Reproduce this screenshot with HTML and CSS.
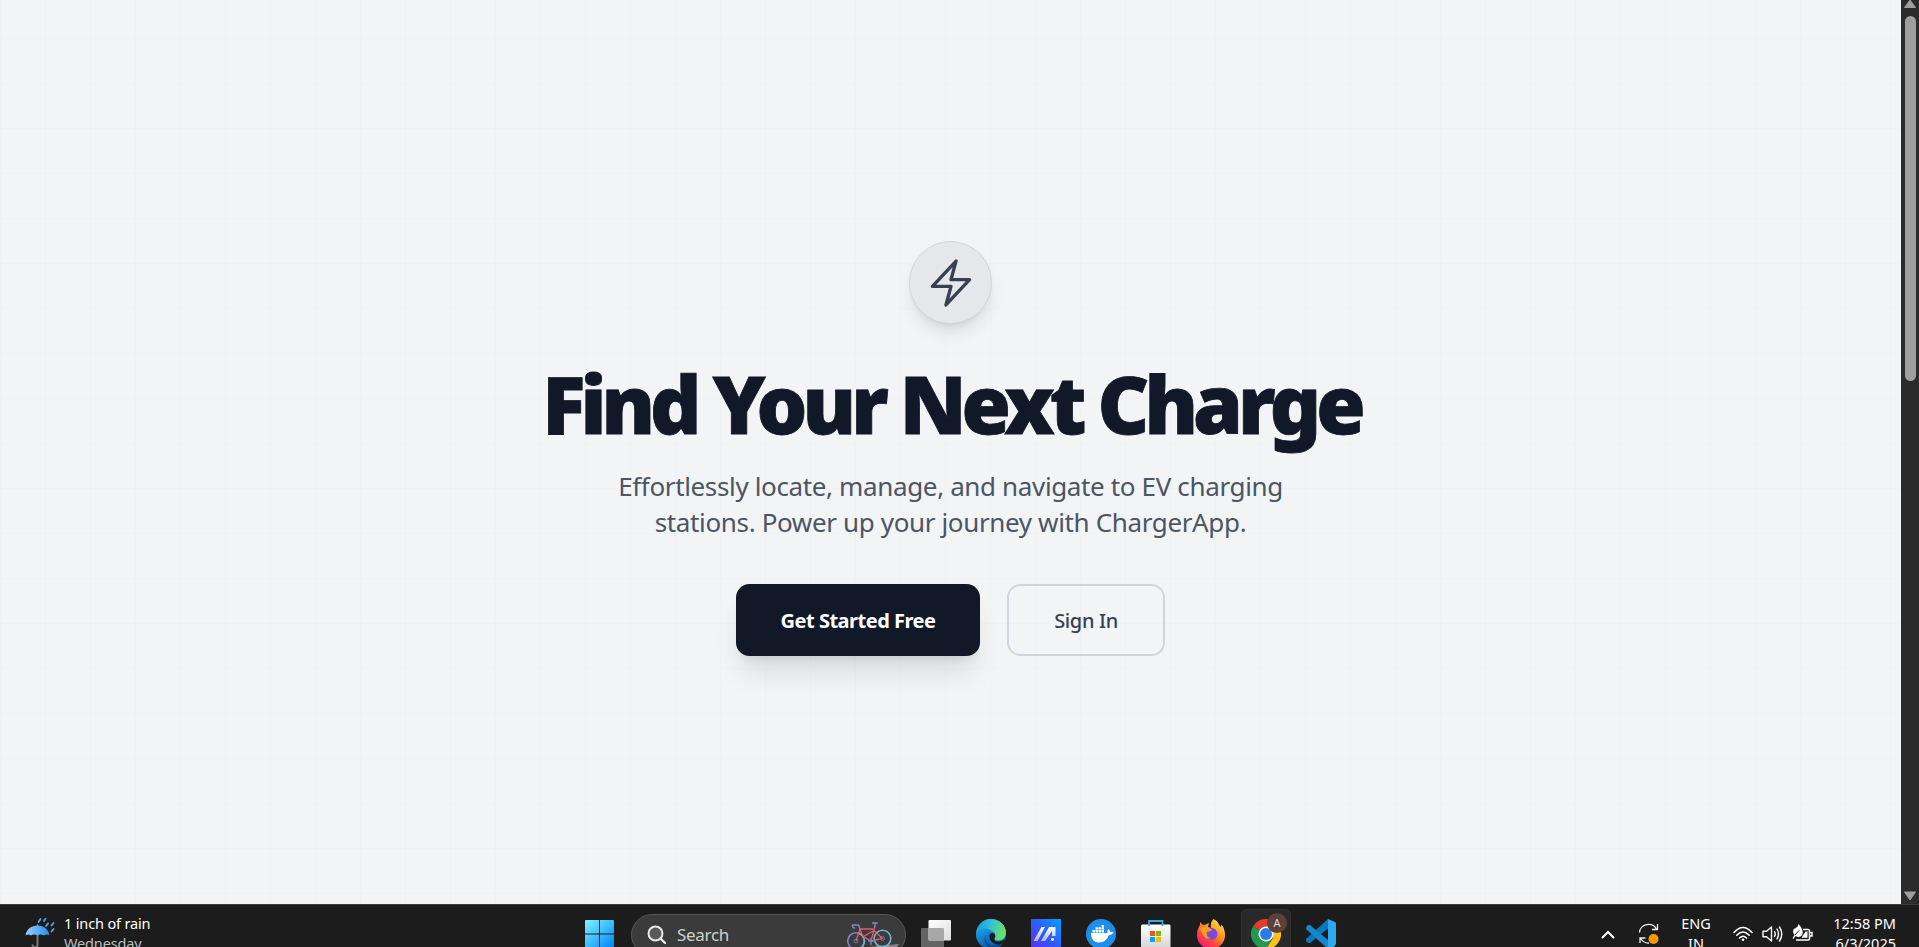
FILE: index.html
```html
<!DOCTYPE html>
<html lang="en">
<head>
<meta charset="utf-8">
<title>ChargerApp</title>
<link rel="stylesheet" href="styles.css">
</head>
<body>
<div class="viewport">
  <main class="hero">
    <div class="badge">
      <svg width="54" height="54" viewBox="0 0 24 24" fill="none" stroke="currentColor" stroke-width="1.5" stroke-linecap="round" stroke-linejoin="round"><path d="M3.75 13.5l10.5-11.25L12 10.5h8.25L9.75 21.75 12 13.5H3.75z"/></svg>
    </div>
    <h1 class="title">Find Your Next Charge</h1>
    <p class="lead">Effortlessly locate, manage, and navigate to EV charging<br>stations. Power up your journey with ChargerApp.</p>
    <div class="actions">
      <a class="btn btn-primary">Get Started Free</a>
      <a class="btn btn-outline">Sign In</a>
    </div>
  </main>
  <div class="scrollbar">
    <svg class="arrow" width="14" height="10" viewBox="0 0 14 10"><path d="M7 0 12.5 7.500H1.5Z" fill="#9f9f9f" stroke="#9f9f9f" stroke-linejoin="round"/></svg>
    <div class="thumb"></div>
    <svg class="arrow" width="14" height="10" viewBox="0 0 14 10"><path d="M1.5 1H12.5L7 9Z" fill="#9f9f9f" stroke="#9f9f9f" stroke-linejoin="round"/></svg>
  </div>
</div>
<footer class="taskbar">
  <div class="weather">
    <svg width="30" height="30" viewBox="0 0 30 30">
      <defs><linearGradient id="um" x2="1"><stop offset="0" stop-color="#9bd0fa"/><stop offset=".45" stop-color="#62b4f7"/><stop offset="1" stop-color="#2b8ae8"/></linearGradient></defs>
      <path d="M12.5 17v9.500q0 3-2.500 3t-2.500-3" fill="none" stroke="#777" stroke-width="2"/>
      <path d="M12.500 6v3" stroke="#777" stroke-width="1.500"/>
      <path d="M.5 17.500C1.500 11 6.500 7.500 12.500 7.500S23.500 11 24.500 17.500Q22 15.500 19 17.500 15.500 15.500 12.500 17.500 9 15.500 6 17.500 3 15.500.5 17.500Z" fill="url(#um)"/>
      <path d="M15.500 1 13.500 4M20.500.800 19 3M28.500 5 26.500 7.500M23 5.500 21 8M28.500 11 26.500 13.500" stroke="#4aa8f5" stroke-width="1.800" stroke-linecap="round"/>
    </svg>
    <div class="weather-text"><span>1 inch of rain</span><span class="dim">Wednesday</span></div>
  </div>
  <div class="apps">
    <div class="cell start">
      <svg width="30" height="30" viewBox="0 0 30 30"><defs><linearGradient id="win" x2="1" y2="1"><stop stop-color="#7df4ff"/><stop offset=".5" stop-color="#3dbdfb"/><stop offset="1" stop-color="#0082f4"/></linearGradient></defs><path d="M0 1.500Q0 1 1 1H14V14.500H0ZM15 1H28Q29 1 29 2V14.500H15ZM0 15.500H14V29H0ZM15 15.500H29V29H15Z" fill="url(#win)"/></svg>
    </div>
    <div class="search">
      <svg width="20" height="20" viewBox="0 0 20 20" fill="#5a5a5a" stroke="#e6e8ec" stroke-width="2"><circle cx="8.500" cy="8.500" r="7"/><path d="M13.500 13.500 18 18" stroke-width="2.400" stroke-linecap="round"/></svg>
      <span class="search-label">Search</span>
      <svg class="bike" width="56" height="34" viewBox="0 0 56 34" fill="none">
        <path d="M18 25.500 55 22 50 30 18 33Z" fill="#858585"/>
        <circle cx="12" cy="19" r="8.300" stroke="#8583d6" stroke-width="1.500"/><path d="M15 11.500A8.300 8.300 0 0 1 18 25" stroke="#70b7d0" stroke-width="1.500"/>
        <circle cx="38.500" cy="16.500" r="8.300" stroke="#78b5cf" stroke-width="1.500"/>
        <circle cx="12" cy="19" r="2" stroke="#5975bd"/><circle cx="38.500" cy="16.500" r="2" stroke="#5975bd"/>
        <path d="M12 19 16 7H29M16 7 18.500 14 27 19 31 4M29 9 18.500 15M27 19 38.500 16.500 29.500 8" stroke="#e0606f" stroke-width="1.300"/>
        <path d="M16 7 14.500 3H8.500Q8 6 11 6M28 1H34M31 1V5M24 19H31M27 16V23" stroke="#7987bd" stroke-width="1.500"/>
      </svg>
    </div>
    <div class="cell">
      <svg width="30" height="30" viewBox="0 0 30 30"><defs><linearGradient id="tv" x2="1" y2="1"><stop stop-color="#fff"/><stop offset="1" stop-color="#dedede"/></linearGradient></defs><rect y="9" width="23" height="20" rx="1" fill="#646464"/><rect x="7.500" y="1" width="22.500" height="20.500" rx="1" fill="url(#tv)"/><path d="M7.500 9H22Q23 9 23 10V21.500H8.500Q7.500 21.500 7.500 20.500Z" fill="#a8a8a8"/></svg>
    </div>
    <div class="cell">
      <svg width="30" height="30" viewBox="0 0 30 30"><defs><linearGradient id="e1" x2="1" y2=".3"><stop stop-color="#198fd8"/><stop offset=".5" stop-color="#35c1d9"/><stop offset="1" stop-color="#6ce35a"/></linearGradient><linearGradient id="e2" x2=".4" y2="1"><stop stop-color="#1fa5e8"/><stop offset="1" stop-color="#0a5fb4"/></linearGradient></defs>
      <circle cx="15" cy="15" r="15" fill="url(#e2)"/><path d="M14 30C8 26 6 20 10 15 12 12 16 12 18 14 15 11 11 9 6.500 10 3 11 1 14 0 15 1 6 7 0 15 0 24 0 30 7 30 13.500 30 19 26 21.500 22 21.500 18 21.500 16.500 19.500 19 17.500Q20 14 16 12 10 9 3 12Z" fill="url(#e1)"/><path d="M0 15C2 9 12 7 17 13 11 11 8 17 9 21 10 26 14 29 17 30 8 31 0 24 0 15Z" fill="url(#e2)"/><path d="M19.500 17.500C16 22 22 25 30 20L31 22 26 26C18 26 13 22 13.500 17 14 13 19 12.500 19.500 17.500Z" fill="#1c1c1c"/><path d="M9.500 16C8 24 15 30 27 24 24 29 19 30.500 15 30 10 27 7 22 9.500 16Z" fill="#124a88"/></svg>
    </div>
    <div class="cell">
      <svg width="30" height="30" viewBox="0 0 30 30"><defs><linearGradient id="ma" x1="0" y1="1" x2="1" y2="0"><stop stop-color="#5a2cf5"/><stop offset=".5" stop-color="#315cfa"/><stop offset="1" stop-color="#00a4ff"/></linearGradient><linearGradient id="mb" y2="1" x2="0"><stop stop-color="#fff"/><stop offset="1" stop-color="#a9b8ff"/></linearGradient></defs><rect width="30" height="30" fill="url(#ma)"/><path d="M2.500 22 10.500 8H14L6.500 22ZM10 22 18 8H24.500V17H21V12L14 22Z" fill="url(#mb)"/><circle cx="21.500" cy="20.500" r="1.400" fill="#fff"/></svg>
    </div>
    <div class="cell">
      <svg width="30" height="30" viewBox="0 0 30 30"><circle cx="15" cy="15" r="15" fill="#1d8eea"/><path d="M5 14H21.500Q21 11.500 22.500 10 24 11 24 13 26 12.500 27.500 13.500 26 16 23 16 20 23.500 13 23.500 5 23.500 5 14Z" fill="#fff"/><path d="M6.500 11H9V13.400H6.500ZM9.500 11H12V13.400H9.500ZM12.500 11H15V13.400H12.500ZM15.500 11H18V13.400H15.500ZM9.500 8.200H12V10.500H9.500ZM12.500 8.200H15V10.500H12.500ZM15.500 8.200H18V10.500H15.500ZM15.500 6H18V7.800H15.500Z" fill="#fff"/></svg>
    </div>
    <div class="cell">
      <svg width="30" height="30" viewBox="0 0 30 30"><defs><linearGradient id="st" x2="0" y2="1"><stop stop-color="#fff"/><stop offset="1" stop-color="#d4d4d4"/></linearGradient></defs><path d="M0 7Q0 5.500 1.500 5.500H28.500Q29.500 5.500 29.500 7V30H0Z" fill="url(#st)"/><path d="M8 7V2H21.500V7" stroke="#29aee4" stroke-width="1.800" fill="none"/><path d="M9 12H14V17H9Z" fill="#f05022"/><path d="M15 12H20V17H15Z" fill="#7fba00"/><path d="M9 18H14V23H9Z" fill="#00a4ef"/><path d="M15 18H20V23H15Z" fill="#ffb900"/></svg>
    </div>
    <div class="cell">
      <svg width="30" height="30" viewBox="0 0 30 30"><defs><linearGradient id="fx" x1=".9" y1="0" x2=".2" y2=".95"><stop stop-color="#fff34d"/><stop offset=".4" stop-color="#ff9a22"/><stop offset=".7" stop-color="#ff4b36"/><stop offset="1" stop-color="#f4137f"/></linearGradient></defs><path d="M17.500 0Q22 2 23 6L25 8 25.500 5.500Q29 10 29 16C29 24 23 30 15 30S1 24 1 16Q1 10 4 6V3L7 6 10 5.500Q11.500 4 13 4L12 8 15 9Q14 3 17.500 0Z" fill="url(#fx)"/><circle cx="15.500" cy="15" r="6" fill="#7d48df"/><path d="M4 9Q9 6 12.500 8.500L16 11Q13 13 10.500 13 10 18 15 20 7 21 4 9Z" fill="#ff9b23"/></svg>
    </div>
    <div class="cell active">
      <svg width="30" height="30" viewBox="0 0 30 30"><path d="M15 15 2 7.500A15 15 0 0 1 28 7.500L26 15Z" fill="#e33b2e"/><path d="M15 15 2 7.500A15 15 0 0 0 15 30L21.500 18.700Z" fill="#24994b"/><path d="M15 7.500H28A15 15 0 0 1 15 30L22 19Z" fill="#fcc21b"/><circle cx="15" cy="15" r="7.500" fill="#fff"/><circle cx="15" cy="15" r="6" fill="#287be8"/></svg>
      <span class="profile">A</span>
    </div>
    <div class="cell">
      <svg width="30" height="30" viewBox="0 0 30 30"><path d="M22 0 29 3Q30 3.500 30 5V25L28 28 22 30Z" fill="#2caaf0"/><path d="M22 0 0 20V22L2 24H4L22 9.500Z" fill="#0878bd"/><path d="M4 6H2L0 8.500V10L22 30V21Z" fill="#1487ce"/></svg>
    </div>
  </div>
  <div class="tray">
    <svg class="chevron" width="14" height="9" viewBox="0 0 14 9"><path d="M1.500 7.500 7 2 12.500 7.500" fill="none" stroke="#fff" stroke-width="2" stroke-linecap="round"/></svg>
    <svg class="update" width="22" height="22" viewBox="0 0 22 22" fill="none" stroke="#eee" stroke-width="1.300"><path d="M1.500 9.500A9 8.500 0 0 1 18.500 6M19.500 1V6.500H14M2 20V15H7.500M2.500 15.500Q6 20.500 11 20"/><circle cx="15.500" cy="16" r="5" fill="#ff9800" stroke="none"/></svg>
    <div class="lang"><span>ENG</span><span>IN</span></div>
    <svg class="wifi" width="20" height="16" viewBox="0 0 20 16" fill="none" stroke="#fff" stroke-width="1.500" stroke-linecap="round"><path d="M1 6.500Q10-3.500 19 6.500M3.800 9.200Q10 2.800 16.200 9.200M6.500 12Q10 8.500 13.500 12"/><circle cx="10" cy="13.800" r="1.300" fill="#fff" stroke="none"/></svg>
    <svg class="sound" width="21" height="18" viewBox="0 0 21 18" fill="none" stroke="#fff" stroke-width="1.400" stroke-linejoin="round" stroke-linecap="round"><path d="M1 6.300H4.500L9.500 2V16L4.500 11.700H1ZM12.500 6.500Q14 9 12.500 11.500M15 4Q18 9 15 14M17.500 2Q22 9 17.500 16"/></svg>
    <svg class="battery" width="21" height="18" viewBox="0 0 21 18"><path d="M11 5.500H16Q17.500 5.500 17.500 7V14.500Q17.500 16 16 16H4M18 8.500H20V12H18" fill="none" stroke="#fff" stroke-width="1.500"/><path d="M13.500 7.500H15.500V13.800H9.500Z" fill="#fff"/><path d="M6.500 0Q12.500 6.500 10 11.500 7 14 3.500 12L1.500 15 .5 14 2.500 11Q-1 6 3.500 4 6 3 6.500 0Z" fill="#fff"/><path d="M3 11 7 6.500" stroke="#1c1c1c"/></svg>
    <div class="clock"><span>12:58 PM</span><span>6/3/2025</span></div>
  </div>
</footer>
</body>
</html>
```

FILE: styles.css
```css
* { box-sizing: border-box; }
body {
  margin: 0;
  width: 1919px;
  height: 947px;
  overflow: hidden;
  display: flex;
  flex-direction: column;
  font-family: "Noto Sans", "Open Sans", sans-serif;
}
svg { display: block; flex: none; }
.viewport { height: 904px; display: flex; }
.hero {
  flex: 1;
  display: flex;
  flex-direction: column;
  align-items: center;
  padding-top: 241px;
  background-color: #f3f4f6;
  background-image:
    linear-gradient(90deg, #eff1f3 1px, transparent 1px),
    linear-gradient(#eff1f3 1px, transparent 1px);
  background-size: 45px 45px;
  background-position: 0 38px;
}
.badge {
  width: 83px;
  height: 83px;
  display: flex;
  align-items: center;
  justify-content: center;
  border: 1px solid #d1d5db;
  border-radius: 50%;
  background: #e5e7eb;
  color: #374151;
  box-shadow: 0 11px 17px -3px rgba(0,0,0,.1), 0 4px 7px -4px rgba(0,0,0,.1);
}
.title {
  margin: 34px 0 0;
  padding-left: 2px;
  height: 90px;
  font-size: 80px;
  line-height: 90px;
  font-weight: 900;
  letter-spacing: -4.95px;
  -webkit-text-stroke: .8px #111827;
  color: #111827;
  white-space: nowrap;
}
.lead {
  margin: 20px 0 0;
  font-size: 26px;
  line-height: 36px;
  letter-spacing: -.36px;
  color: #4b5563;
  text-align: center;
  white-space: nowrap;
}
.actions { display: flex; gap: 27px; margin-top: 44px; }
.btn {
  height: 72px;
  display: flex;
  align-items: center;
  justify-content: center;
  border-radius: 13.5px;
  font-size: 20px;
  white-space: nowrap;
}
.btn-primary {
  width: 244px;
  background: #111827;
  color: #fff;
  font-weight: 700;
  letter-spacing: -.5px;
  box-shadow: 0 22px 28px -6px rgba(0,0,0,.1), 0 9px 11px -7px rgba(0,0,0,.1);
}
.btn-outline {
  width: 158px;
  border: 2px solid #d1d5db;
  color: #374151;
  font-weight: 500;
  letter-spacing: -.35px;
}
.scrollbar {
  width: 18px;
  background: #2b2b2b;
  display: flex;
  flex-direction: column;
  align-items: center;
  padding-bottom: 3px;
}
.scrollbar .arrow:last-child { margin-top: auto; }
.thumb {
  width: 11px;
  height: 365px;
  margin-top: 6px;
  border-radius: 6px;
  background: #9f9f9f;
}
.taskbar {
  height: 43px;
  overflow: hidden;
  display: flex;
  justify-content: space-between;
  align-items: flex-start;
  background: #1c1c1c;
  border-top: 1px solid #3a3d3e;
  color: #fff;
  font-size: 14.5px;
  line-height: 20px;
}
.weather { width: 585px; display: flex; padding: 13px 0 0 25px; }
.weather-text { display: flex; flex-direction: column; margin: -5px 0 0 9px; letter-spacing: -.15px; }
.dim { color: #bdbdbd; }
.apps { display: flex; }
.cell {
  position: relative;
  width: 50px;
  height: 50px;
  margin: 4px 5px 0 0;
  padding: 10px 0 0 10px;
}
.start { width: 46px; margin: 4px 0 0; padding-left: 0; }
.search {
  width: 275px;
  height: 42px;
  margin: 9px 5px 0 0;
  display: flex;
  padding: 10px 12px 0 15px;
  border: 1px solid #565656;
  border-radius: 21px;
  background: #3b3b3b;
}
.search-label { margin: -1px 0 0 10px; font-size: 17px; line-height: 22px; letter-spacing: -.3px; color: #d0d0d0; }
.bike { margin: -3px -7px 0 auto; }
.active {
  border-radius: 6px;
  background: #292929;
  box-shadow: inset 0 0 0 1px #323232;
}
.profile {
  position: absolute;
  top: 4px;
  left: 26px;
  width: 20px;
  height: 20px;
  border-radius: 50%;
  background: #5d4037;
  color: #ddd;
  font-size: 11px;
  line-height: 20px;
  text-align: center;
}
.tray { width: 568px; display: flex; padding-right: 23px; justify-content: flex-end; }
.chevron { margin-top: 25px; }
.update { margin: 18px 0 0 23px; }
.lang { width: 40px; margin: 8px 0 0 16px; display: flex; flex-direction: column; align-items: center; }
.wifi { margin: 21px 0 0 17px; }
.sound { margin: 20px 0 0 9px; }
.battery { margin: 19px 0 0 9px; }
.clock { width: 83px; margin: 8px 0 0 0; display: flex; flex-direction: column; align-items: flex-end; }
```
